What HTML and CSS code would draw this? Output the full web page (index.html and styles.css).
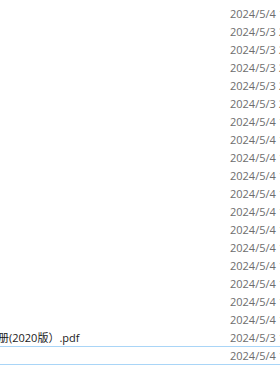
FILE: index.html
```html
<!DOCTYPE html>
<html lang="zh">
<head>
  <meta charset="UTF-8">
  <title>文件列表</title>
  <link rel="stylesheet" href="styles.css">
</head>
<body>

<div class="file-list">
  <div class="file-row"><span class="file-name"></span><span class="file-date">2024/5/4 10:21</span></div>
  <div class="file-row"><span class="file-name"></span><span class="file-date">2024/5/3 21:40</span></div>
  <div class="file-row"><span class="file-name"></span><span class="file-date">2024/5/3 21:40</span></div>
  <div class="file-row"><span class="file-name"></span><span class="file-date">2024/5/3 21:41</span></div>
  <div class="file-row"><span class="file-name"></span><span class="file-date">2024/5/3 21:41</span></div>
  <div class="file-row"><span class="file-name"></span><span class="file-date">2024/5/3 21:42</span></div>
  <div class="file-row"><span class="file-name"></span><span class="file-date">2024/5/4 10:05</span></div>
  <div class="file-row"><span class="file-name"></span><span class="file-date">2024/5/4 10:06</span></div>
  <div class="file-row"><span class="file-name"></span><span class="file-date">2024/5/4 10:06</span></div>
  <div class="file-row"><span class="file-name"></span><span class="file-date">2024/5/4 10:07</span></div>
  <div class="file-row"><span class="file-name"></span><span class="file-date">2024/5/4 10:08</span></div>
  <div class="file-row"><span class="file-name"></span><span class="file-date">2024/5/4 10:09</span></div>
  <div class="file-row"><span class="file-name"></span><span class="file-date">2024/5/4 10:10</span></div>
  <div class="file-row"><span class="file-name"></span><span class="file-date">2024/5/4 10:11</span></div>
  <div class="file-row"><span class="file-name"></span><span class="file-date">2024/5/4 10:12</span></div>
  <div class="file-row"><span class="file-name"></span><span class="file-date">2024/5/4 10:13</span></div>
  <div class="file-row"><span class="file-name"></span><span class="file-date">2024/5/4 10:14</span></div>
  <div class="file-row"><span class="file-name"></span><span class="file-date">2024/5/4 10:15</span></div>
  <div class="file-row"><span class="file-name"><span class="name-text">册(2020版）.pdf</span></span><span class="file-date">2024/5/3 18:30</span></div>
  <!-- fila con foco -->
  <div class="file-row focused"><span class="file-name"></span><span class="file-date">2024/5/4 10:20</span></div>
</div>

</body>
</html>
```

FILE: styles.css
```css
body {
  margin: 0;
  padding: 0;
  background: #fff;
  overflow: hidden;
  font-family: "Segoe UI", "Open Sans", "Noto Sans CJK SC", sans-serif;
  font-size: 11px;
}

.file-list {
  padding-top: 4px;
}

.file-row {
  display: flex;
  align-items: center;
  height: 18px;
  box-sizing: border-box;
  border-top: 1px solid transparent;
  border-bottom: 1px solid transparent;
  white-space: nowrap;
  overflow: hidden;
}

.file-row.focused {
  height: 19px;
  border-color: #a9d5f7;
}

.file-name {
  flex: 0 0 230px;
  overflow: hidden;
  color: #1a1a1a;
}

.name-text {
  display: inline-block;
  margin-left: -2px; /* el nombre viene cortado por la izquierda */
}

.file-date {
  color: #6d6d6d;
}
```
